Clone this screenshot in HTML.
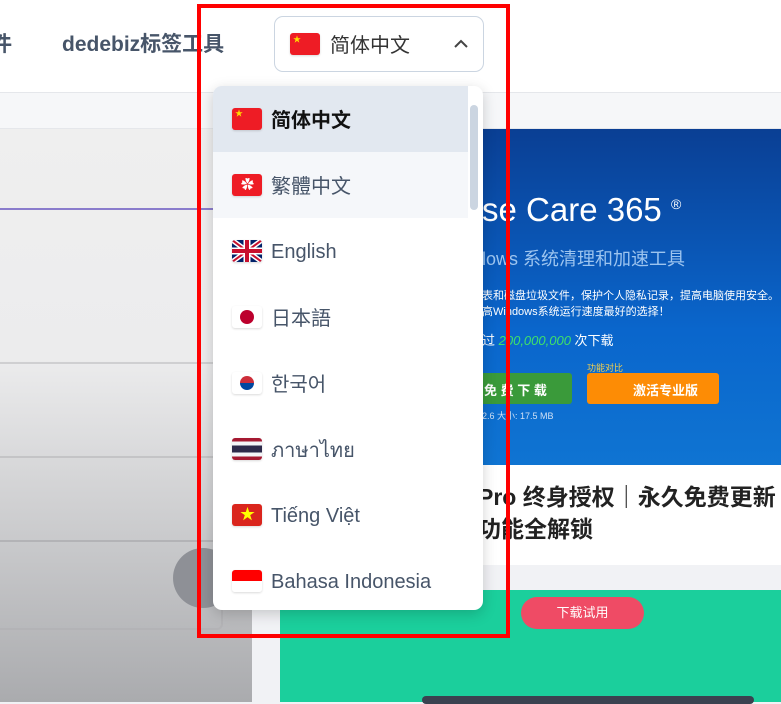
<!DOCTYPE html>
<html><head><meta charset="utf-8"><style>
*{margin:0;padding:0;box-sizing:border-box}
body{width:781px;height:702px;overflow:hidden;position:relative;background:#f1f2f5;font-family:"Liberation Sans","Noto Sans CJK SC",sans-serif}
.abs{position:absolute}
.hdr{left:0;top:0;width:781px;height:93px;background:#fff;border-bottom:1px solid #e5e7eb}
.nav{top:30px;font-size:21px;font-weight:bold;color:#475569;line-height:30px}
.sel{left:274px;top:16px;width:210px;height:56px;border:1px solid #cbd5e1;border-radius:9px;background:#fff}
.flag{width:30px;height:22px;border-radius:3px;overflow:hidden;position:absolute;box-shadow:0 1px 2px rgba(0,0,0,.15)}
.dd{left:213px;top:86px;width:270px;height:524px;background:#fff;border-radius:9px;box-shadow:0 4px 14px rgba(0,0,0,.18);overflow:hidden}
.it{position:absolute;left:0;width:255px;height:66px}
.it .flag{left:19px;top:22px}
.it span{position:absolute;left:58px;top:20px;font-size:20px;color:#475569;line-height:30px;height:30px}
</style></head><body>
<div class="abs hdr"></div>
<div class="abs nav" style="left:-9px">件</div>
<div class="abs nav" style="left:62px">dedebiz标签工具</div>
<div class="abs sel">
 <div class="flag" style="left:15px;top:16px;background:#ee1c25"><span style="position:absolute;left:3px;top:1px;color:#ffde00;font-size:8px">★</span></div>
 <span class="abs" style="left:55px;top:14px;font-size:20px;color:#333;line-height:30px">简体中文</span>
 <svg class="abs" style="left:178px;top:21px" width="16" height="12"><path d="M2 9 L8 3 L14 9" stroke="#444" stroke-width="2" fill="none"/></svg>
</div>
<div class="abs" style="left:0;top:93px;width:781px;height:36px;background:#f6f7f9;border-bottom:1px solid #e5e7eb"></div>
<div class="abs" style="left:0;top:129px;width:252px;height:573px;background:linear-gradient(#efefef,#ececed 40%,#aaabae)"></div>
<div class="abs" style="left:0;top:208px;width:215px;height:2px;background:#8a7ccc"></div>
<div class="abs" style="left:0;top:362px;width:215px;height:2px;background:#cfcfd1"></div>
<div class="abs" style="left:0;top:456px;width:215px;height:2px;background:#c4c4c6"></div>
<div class="abs" style="left:-10px;top:540px;width:233px;height:90px;border:2px solid #b3b3b6;border-radius:6px"></div>
<div class="abs" style="left:173px;top:548px;width:60px;height:60px;border-radius:50%;background:#8e9096"></div>
<div class="abs" style="left:280px;top:129px;width:501px;height:336px;background:linear-gradient(#0a3f94,#0a66cc 60%,#0f74d2)"></div>
<div class="abs" style="left:482px;top:184px;font-size:33px;color:#fff;line-height:40px">se Care 365 <sup style="font-size:14px">®</sup></div>
<div class="abs" style="left:482px;top:245px;font-size:18px;color:#9cc4ef">lows 系统清理和加速工具</div>
<div class="abs" style="left:482px;top:288px;font-size:11px;color:#fff;line-height:16px;white-space:nowrap">表和磁盘垃圾文件，保护个人隐私记录，提高电脑使用安全。<br>高Windows系统运行速度最好的选择！</div>
<div class="abs" style="left:482px;top:330px;font-size:13px;color:#fff">过 <i style="color:#3fe06a">200,000,000</i> 次下载</div>
<div class="abs" style="left:587px;top:361px;font-size:9px;color:#f7d04a">功能对比</div>
<div class="abs" style="left:470px;top:373px;width:102px;height:31px;background:#3a9a3a;border-radius:3px;color:#fff;font-size:13px;padding:7px 0 0 14px;font-weight:bold">免 费 下 载</div>
<div class="abs" style="left:587px;top:373px;width:132px;height:31px;background:#fd8c05;border-radius:3px;color:#fff;font-size:13px;padding:7px 0 0 46px;font-weight:bold">激活专业版</div>
<div class="abs" style="left:482px;top:409px;font-size:9px;color:#cfe0f5">2.6 大小: 17.5 MB</div>
<div class="abs" style="left:280px;top:465px;width:501px;height:100px;background:#fff"></div>
<div class="abs" style="left:478px;top:481px;font-size:23px;font-weight:bold;color:#222;line-height:32px;white-space:nowrap">Pro 终身授权｜永久免费更新<br>功能全解锁</div>
<div class="abs" style="left:280px;top:590px;width:501px;height:112px;background:#1bcf9c"></div>
<div class="abs" style="left:521px;top:597px;width:123px;height:32px;background:#ef4b65;border-radius:16px;color:#fff;font-size:13px;text-align:center;line-height:32px">下载试用</div>
<div class="abs" style="left:422px;top:696px;width:332px;height:8px;background:#3a4250;border-radius:4px"></div>
<div class="abs dd">
 <div class="it" style="top:0;background:#e2e8f0"><div class="flag" style="background:#ee1c25"><span style="position:absolute;left:3px;top:1px;color:#ffde00;font-size:8px;line-height:10px">★</span></div><span style="color:#111;font-weight:bold">简体中文</span></div>
 <div class="it" style="top:66px;background:#f5f7fa"><div class="flag" style="background:#ee1c25"><span style="position:absolute;left:9px;top:3px;color:#fff;font-size:13px;line-height:16px">✿</span></div><span>繁體中文</span></div>
 <div class="it" style="top:132px"><div class="flag"><svg width="30" height="22"><rect width="30" height="22" fill="#012169"/><path d="M0 0L30 22M30 0L0 22" stroke="#fff" stroke-width="5"/><path d="M0 0L30 22M30 0L0 22" stroke="#c8102e" stroke-width="2"/><path d="M15 0V22M0 11H30" stroke="#fff" stroke-width="7"/><path d="M15 0V22M0 11H30" stroke="#c8102e" stroke-width="4"/></svg></div><span style="top:19px">English</span></div>
 <div class="it" style="top:198px"><div class="flag" style="background:#fff"><div class="abs" style="left:8px;top:4px;width:14px;height:14px;border-radius:50%;background:#bc002d"></div></div><span>日本語</span></div>
 <div class="it" style="top:264px"><div class="flag" style="background:#fff"><div class="abs" style="left:8px;top:4px;width:14px;height:14px;border-radius:50%;background:linear-gradient(#cd2e3a 50%,#0047a0 50%)"></div></div><span>한국어</span></div>
 <div class="it" style="top:330px"><div class="flag" style="background:linear-gradient(#a51931 17%,#f4f5f8 17% 33%,#2d2a4a 33% 67%,#f4f5f8 67% 83%,#a51931 83%)"></div><span style="top:18px;font-family:'Noto Sans CJK SC','DejaVu Sans',sans-serif">ภาษาไทย</span></div>
 <div class="it" style="top:396px"><div class="flag" style="background:#da251d"><span style="position:absolute;left:8px;top:1px;color:#ff0;font-size:15px;line-height:20px">★</span></div><span style="top:19px">Tiếng Việt</span></div>
 <div class="it" style="top:462px"><div class="flag" style="background:linear-gradient(#f00 50%,#fff 50%)"></div><span style="top:19px">Bahasa Indonesia</span></div>
 <div class="abs" style="left:257px;top:19px;width:8px;height:105px;background:#cbd5e1;border-radius:4px"></div>
</div>
<div class="abs" style="left:197px;top:4px;width:313px;height:634px;border:4px solid #f00"></div>
</body></html>
